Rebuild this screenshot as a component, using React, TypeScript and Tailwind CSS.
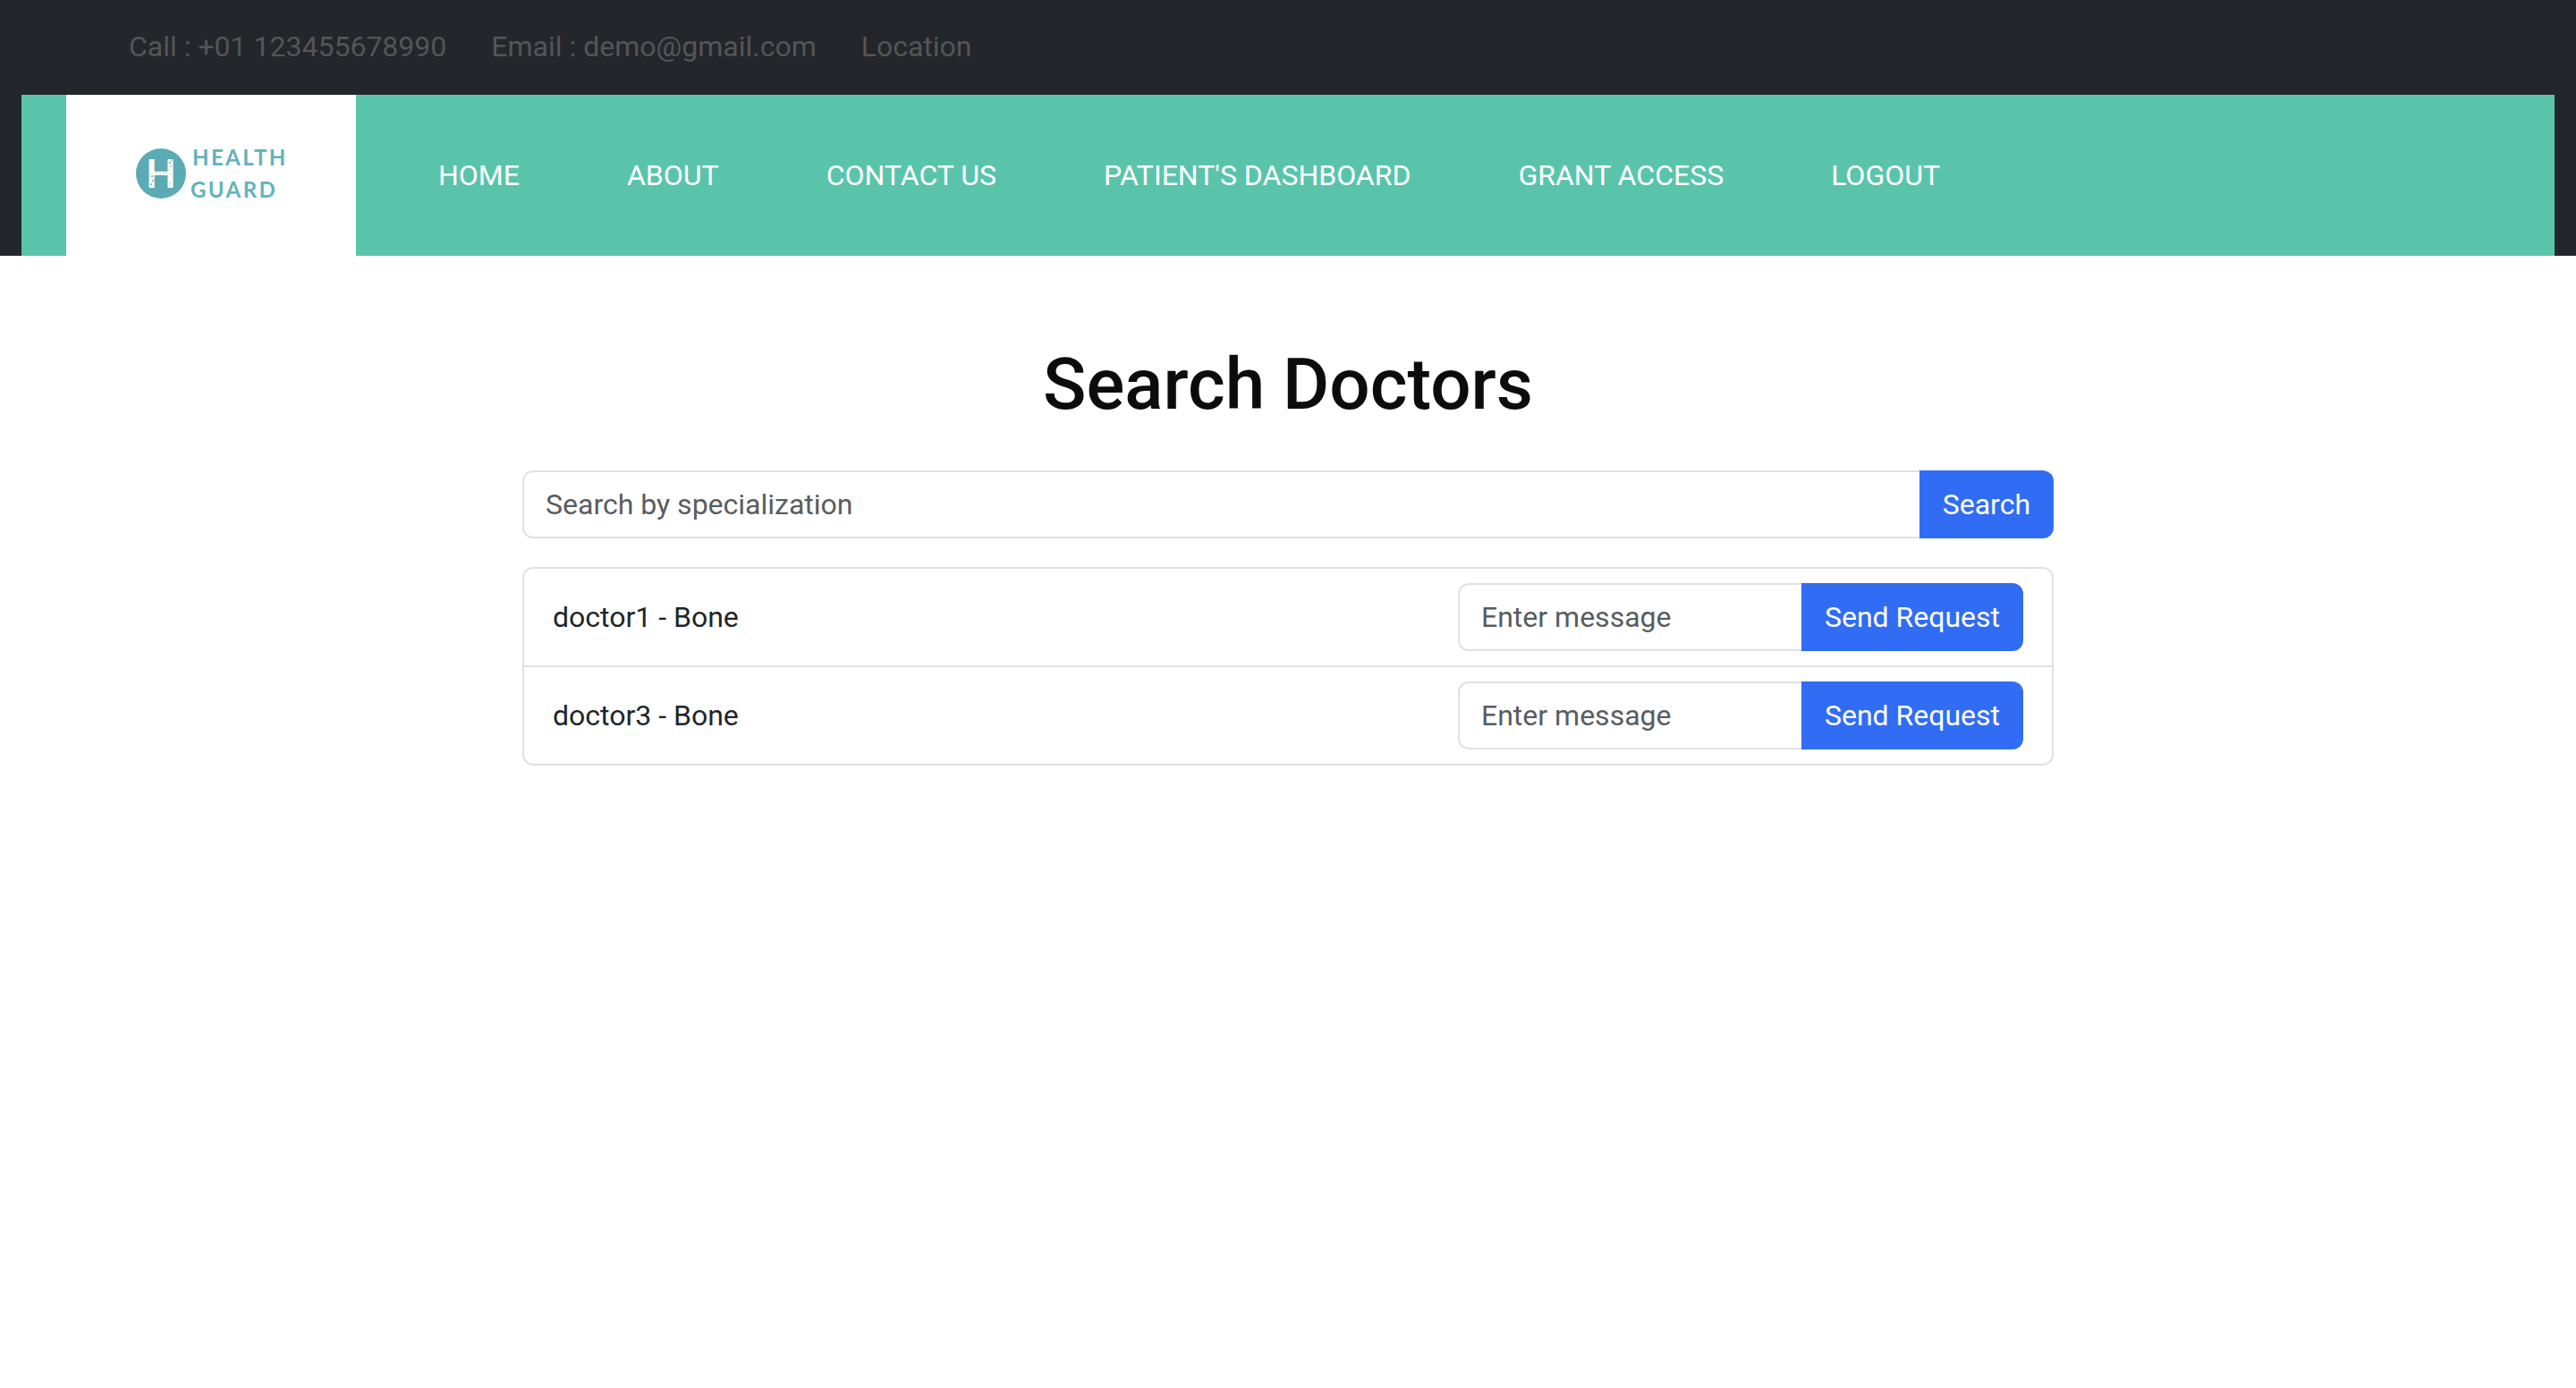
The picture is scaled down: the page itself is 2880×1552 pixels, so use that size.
const contacts = [
  { label: 'Call : +01 123455678990', href: 'tel:+01123455678990' },
  { label: 'Email : demo@gmail.com', href: 'mailto:demo@gmail.com' },
  { label: 'Location', href: '#location' },
];

const links = ['Home', 'About', 'Contact Us', "Patient's Dashboard", 'Grant Access', 'Logout'];

const doctors = ['doctor1 - Bone', 'doctor3 - Bone'];

// Worn-print flecks on the letter in the logo's disc: x, y, radius
const flecks = [
  [18, 33, 1], [19, 38, 1], [17, 42, 1], [18, 18, 0.5], [20, 22, 0.5],
  [23, 29, 0.6], [27, 31, 0.6], [31, 30, 0.7], [34, 29, 0.6], [38, 18, 1],
  [40, 15, 0.8], [39, 22, 0.8], [37, 26, 0.6], [39, 31, 0.7], [38, 41, 0.7],
];

function Logo() {
  return (
    <svg viewBox="0 -10 200 80" className="h-[80px] w-[200px]" role="img" aria-label="Health Guard">
      <circle cx="28" cy="30" r="28" fill="#5aabb3" />
      <text x="28" y="46" textAnchor="middle" fontFamily="Lato, sans-serif" fontWeight="700" fontSize="44" fill="#fff">
        H
      </text>
      {flecks.map(([x, y, r]) => (
        <circle key={`${x}-${y}`} cx={x} cy={y} r={r} fill="#5aabb3" />
      ))}
      <g fontFamily="Lato, sans-serif" fontWeight="700" fontSize="24" fill="#61b3ba" className="tracking-widest">
        <text x="63" y="21">HEALTH</text>
        <text x="61" y="57">GUARD</text>
      </g>
    </svg>
  );
}

function InputGroup({ label, action }: { label: string; action: string }) {
  return (
    <form className="flex w-full" onSubmit={(e) => e.preventDefault()}>
      <input
        type="text"
        aria-label={label}
        placeholder={label}
        className="min-w-0 flex-1 rounded-l-xl border-2 border-r-0 border-[#dee2e6] bg-white px-6 py-3 leading-[48px] text-[#212529] outline-none placeholder:text-[#595c5f]"
      />
      <button type="submit" className="rounded-r-xl bg-[#316cf4] px-[26px] py-3.5 leading-[48px] whitespace-nowrap text-white">
        {action}
      </button>
    </form>
  );
}

export default function App() {
  return (
    <div className="min-h-screen bg-white font-[Roboto,sans-serif] text-[32px] leading-[48px] text-[#212529]">
      <header className="bg-[#23262b] px-6">
        <div className="flex gap-[50px] px-[120px] pt-7 pb-[30px] text-[#555555]">
          {contacts.map((c) => (
            <a key={c.label} href={c.href}>
              {c.label}
            </a>
          ))}
        </div>
        <div className="flex bg-[#5ac4ab] px-[50px]">
          <a href="#home" className="flex h-[180px] w-[324px] items-center bg-white pb-1 pl-[78px]">
            <Logo />
          </a>
          <nav className="ml-[92px] flex items-center gap-[120px] text-white uppercase">
            {links.map((l) => (
              <a key={l} href={`#${l.toLowerCase().replace(/[^a-z]+/g, '-')}`}>
                {l}
              </a>
            ))}
          </nav>
        </div>
      </header>

      <main className="mx-auto w-full max-w-[1760px] px-6 pt-24">
        <h2 className="mb-12 text-center text-[80px] leading-[96px] font-medium text-[#0c0c0c]">Search Doctors</h2>
        <InputGroup label="Search by specialization" action="Search" />
        <ul className="mt-8 divide-y-2 divide-[#dee2e6] rounded-xl border-2 border-[#dee2e6]">
          {doctors.map((d) => (
            <li key={d} className="flex items-center justify-between px-8 py-4">
              <span>{d}</span>
              <div className="w-[632px]">
                <InputGroup label="Enter message" action="Send Request" />
              </div>
            </li>
          ))}
        </ul>
      </main>
    </div>
  );
}
